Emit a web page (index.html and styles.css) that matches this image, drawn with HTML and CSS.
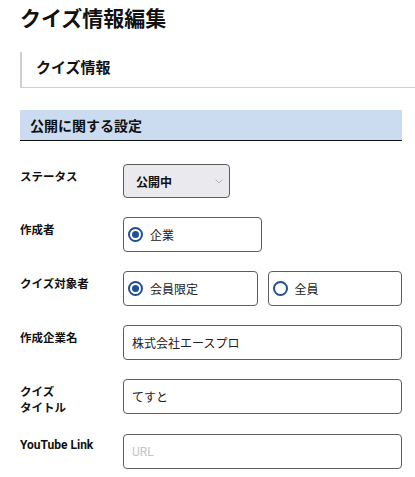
FILE: index.html
```html
<!DOCTYPE html>
<html lang="ja">
<head>
<meta charset="utf-8">
<title>クイズ情報編集</title>
<link rel="stylesheet" href="styles.css">
</head>
<body>
<div class="page">
  <h1 class="title">クイズ情報編集</h1>
  <div class="subhead">クイズ情報</div>
  <div class="section">公開に関する設定</div>

  <div class="form">
    <div class="row">
      <div class="label">ステータス</div>
      <div class="control">
        <div class="select">
          <span class="select-text">公開中</span>
          <svg class="chevron" width="8" height="5" viewBox="0 0 8 5"><path d="M0.5 0.5 L4 4 L7.5 0.5" fill="none" stroke="#b0b0b8" stroke-width="1"/></svg>
        </div>
      </div>
    </div>

    <div class="row">
      <div class="label">作成者</div>
      <div class="control">
        <label class="radio-box w139"><input type="radio" name="author" checked><span>企業</span></label>
      </div>
    </div>

    <div class="row">
      <div class="label">クイズ対象者</div>
      <div class="control radios">
        <label class="radio-box grow"><input type="radio" name="target" checked><span>会員限定</span></label>
        <label class="radio-box grow"><input type="radio" name="target"><span>全員</span></label>
      </div>
    </div>

    <div class="row">
      <div class="label">作成企業名</div>
      <div class="control">
        <input class="text" type="text" value="株式会社エースプロ">
      </div>
    </div>

    <div class="row">
      <div class="label">クイズ<br>タイトル</div>
      <div class="control">
        <input class="text" type="text" value="てすと">
      </div>
    </div>

    <div class="row">
      <div class="label latin">YouTube Link</div>
      <div class="control">
        <input class="text" type="text" placeholder="URL">
      </div>
    </div>
  </div>
</div>
</body>
</html>
```

FILE: styles.css
```css
* { box-sizing: border-box; }

html, body {
  margin: 0;
  padding: 0;
  background: #ffffff;
}

body {
  font-family: "Roboto", "Noto Sans CJK JP", sans-serif;
  color: #111111;
}

.page {
  padding: 0 13px 0 20px;
}

.title {
  margin: 0;
  font-size: 21px;
  line-height: 34px;
  font-weight: 700;
  font-family: "Noto Sans CJK JP", sans-serif;
}

.subhead {
  margin: 18px -13px 0 0;
  height: 36px;
  border-left: 2px solid #cfcfcf;
  border-bottom: 1px solid #cfcfcf;
  padding: 0 0 0 14px;
  font-size: 15px;
  font-weight: 700;
  line-height: 30px;
  font-family: "Noto Sans CJK JP", sans-serif;
}

.section {
  margin-top: 22px;
  height: 31px;
  background: #cbdbf0;
  border-bottom: 1px solid #111111;
  padding-left: 10px;
  font-size: 14px;
  font-weight: 700;
  line-height: 31px;
  font-family: "Noto Sans CJK JP", sans-serif;
}

.form {
  margin-top: 23px;
  display: flex;
  flex-direction: column;
  gap: 19px;
}

.row {
  display: flex;
  align-items: flex-start;
}

.label {
  width: 103px;
  flex: none;
  padding-top: 4px;
  font-size: 11.5px;
  line-height: 16px;
  font-weight: 700;
  font-family: "Noto Sans CJK JP", sans-serif;
}

.label.latin {
  font-family: "Roboto", "Noto Sans CJK JP", sans-serif;
  font-size: 12px;
  padding-top: 3px;
}

.control {
  flex: 1;
  display: flex;
}

.radios {
  gap: 10px;
}

.select {
  width: 107px;
  height: 34px;
  background: #e9e9ee;
  border: 1px solid #5d5d5d;
  border-radius: 4px;
  display: flex;
  align-items: center;
  justify-content: space-between;
  padding: 0 6px 0 12px;
}

.select-text {
  font-size: 12px;
  font-weight: 700;
  font-family: "Noto Sans CJK JP", sans-serif;
}

.chevron {
  display: block;
  margin-top: 1px;
}

.radio-box {
  height: 35px;
  border: 1px solid #5d5d5d;
  border-radius: 4px;
  display: flex;
  align-items: center;
  gap: 7px;
  padding-left: 4px;
  font-size: 12px;
  font-family: "Noto Sans CJK JP", sans-serif;
  color: #222222;
}

.radio-box.w139 { width: 139px; }
.radio-box.grow { flex: 1; }

.radio-box input {
  appearance: none;
  -webkit-appearance: none;
  margin: 0;
  width: 15px;
  height: 15px;
  border: 2px solid #23508f;
  border-radius: 50%;
  background: #ffffff;
  position: relative;
  flex: none;
}

.radio-box input:checked::after {
  content: "";
  position: absolute;
  left: 2px;
  top: 2px;
  width: 7px;
  height: 7px;
  border-radius: 50%;
  background: #23508f;
}

.text {
  width: 100%;
  height: 35px;
  border: 1px solid #5d5d5d;
  border-radius: 4px;
  padding: 0 8px;
  margin: 0;
  font-size: 12px;
  font-family: "Roboto", "Noto Sans CJK JP", sans-serif;
  color: #222222;
  background: #ffffff;
  outline: none;
}

.text::placeholder {
  color: #c4c4c4;
}
```
